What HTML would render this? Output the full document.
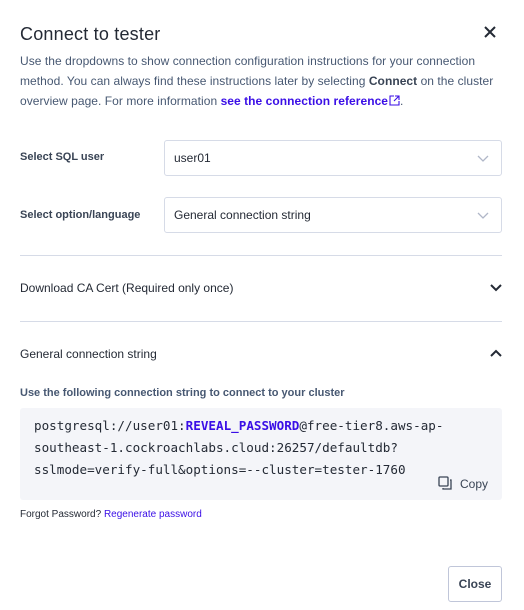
<!DOCTYPE html>
<html><head><style>
*{box-sizing:border-box;margin:0;padding:0}
body{width:524px;height:610px;background:#fff;font-family:"Liberation Sans",sans-serif;color:#394455;position:relative;overflow:hidden}
.abs{position:absolute}
h1{position:absolute;left:20px;top:24px;font-size:18px;font-weight:normal;color:#242a35;letter-spacing:0.2px}
.x{position:absolute;left:484px;top:26px}
.desc{position:absolute;left:20px;top:51px;width:484px;font-size:12px;line-height:20px;color:#475872;letter-spacing:0.05px}
.desc b{color:#394455}
a{color:#3a0ee6;font-weight:bold;text-decoration:none}
.lab{position:absolute;left:20px;font-size:11px;font-weight:bold;color:#394455}
.sel{position:absolute;left:164px;width:338px;height:36px;border:1px solid #d6dbe7;border-radius:3px;font-size:12px;color:#242a35;padding:10px 9px}
.sel svg{position:absolute;right:12px;top:14px}
.hr{position:absolute;left:20px;width:482px;height:1px;background:#d6dbe7}
.acc{position:absolute;left:20px;font-size:12px;color:#242a35}
.code{position:absolute;left:20px;top:408px;width:482px;height:92px;background:#f4f5f9;border-radius:3px}
.code pre{position:absolute;left:14px;top:7px;font-family:"DejaVu Sans Mono","Liberation Mono",monospace;font-size:12.6px;line-height:22px;color:#242a35}
.code pre b{color:#3a0ee6}
.btn{position:absolute;left:448px;top:566px;width:54px;height:36px;border:1px solid #c0c6d9;border-radius:3px;font-size:12px;font-weight:bold;color:#394455;text-align:center;line-height:34px}
</style></head><body>
<h1>Connect to tester</h1>
<svg class="x" width="12" height="12" viewBox="0 0 12 12"><path d="M1 1L11 11M11 1L1 11" stroke="#242a35" stroke-width="2"/></svg>
<div class="desc">Use the dropdowns to show connection configuration instructions for your connection method. You can always find these instructions later by selecting <b>Connect</b> on the cluster overview page. For more information <a>see the connection reference</a><svg width="11" height="11" viewBox="0 0 11 11" style="vertical-align:-1px;margin-left:1px"><path d="M5 1H1V10H10V6M6 1H10V5M10 1L5 6" stroke="#3a0ee6" fill="none" stroke-width="1.1"/></svg>.</div>
<div class="lab" style="top:151px">Select SQL user</div>
<div class="sel" style="top:140px">user01<svg width="12" height="7" viewBox="0 0 12 7"><path d="M1 1L6 6L11 1" stroke="#b0b7c8" fill="none" stroke-width="1.3"/></svg></div>
<div class="lab" style="top:209px">Select option/language</div>
<div class="sel" style="top:197px">General connection string<svg width="12" height="7" viewBox="0 0 12 7"><path d="M1 1L6 6L11 1" stroke="#b0b7c8" fill="none" stroke-width="1.3"/></svg></div>
<div class="hr" style="top:255px"></div>
<div class="acc" style="top:281px">Download CA Cert (Required only once)</div>
<svg class="abs" style="left:490px;top:284px" width="12" height="8" viewBox="0 0 12 8"><path d="M1 1L6 6L11 1" stroke="#242a35" fill="none" stroke-width="2"/></svg>
<div class="hr" style="top:321px"></div>
<div class="acc" style="top:347px">General connection string</div>
<svg class="abs" style="left:490px;top:349px" width="12" height="8" viewBox="0 0 12 8"><path d="M1 7L6 2L11 7" stroke="#242a35" fill="none" stroke-width="2"/></svg>
<div class="lab" style="top:387px;color:#475872">Use the following connection string to connect to your cluster</div>
<div class="code"><pre>postgresql://user01:<b>REVEAL_PASSWORD</b>@free-tier8.aws-ap-
southeast-1.cockroachlabs.cloud:26257/defaultdb?
sslmode=verify-full&amp;options=--cluster=tester-1760</pre>
<svg class="abs" style="left:418px;top:68px" width="15" height="15" viewBox="0 0 15 15"><rect x="1" y="1" width="9" height="9" rx="1" stroke="#394455" fill="none" stroke-width="1.3"/><path d="M5 12V13H13V4H12" stroke="#394455" fill="none" stroke-width="1.3"/></svg>
<div class="abs" style="left:440px;top:69px;font-size:12px;color:#394455">Copy</div></div>
<div class="abs" style="left:20px;top:509px;font-size:10px;color:#242a35">Forgot Password? <span style="color:#3a0ee6">Regenerate password</span></div>
<div class="btn">Close</div>
</body></html>
